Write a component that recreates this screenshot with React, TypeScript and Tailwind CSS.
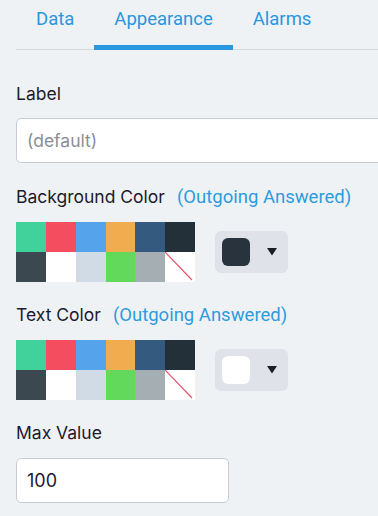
import React from "react";

const SWATCHES = [
  "bg-[#41d19a]",
  "bg-[#f34d5f]",
  "bg-[#55a3ea]",
  "bg-[#f0ac4f]",
  "bg-[#345a80]",
  "bg-[#232f39]",
  "bg-[#3b4850]",
  "bg-white",
  "bg-[#d1dbe5]",
  "bg-[#62d95a]",
  "bg-[#a5aeb3]",
];

const TABS = ["Data", "Appearance", "Alarms"];

function Palette() {
  return (
    <div className="grid w-[179px] grid-cols-6">
      {SWATCHES.map((c, i) => (
        <div key={i} className={`h-[30px] ${c}`} />
      ))}
      {/* "none" swatch */}
      <div className="h-[30px] bg-white">
        <svg width="30" height="30" viewBox="0 0 30 30" className="block">
          <line x1="0" y1="0" x2="27" y2="28" stroke="#e0566a" strokeWidth="1.2" />
        </svg>
      </div>
    </div>
  );
}

function ColorPicker({ title, current }: { title: string; current: string }) {
  return (
    <div>
      <div className="flex items-baseline gap-3 leading-6">
        <span className="text-[17.5px] text-[#1d1a2c] [font-family:Inter,sans-serif]">{title}</span>
        <span className="text-[18.5px] text-[#2d9be0] [font-family:Roboto,sans-serif]">(Outgoing Answered)</span>
      </div>
      <div className="mt-[13px] flex items-center gap-5">
        <Palette />
        <button className="flex h-[42px] w-[73px] items-center rounded-[6px] bg-[#dfe2e9] pl-[7px]">
          <span className={`h-[28px] w-[28px] rounded-[6px] ${current}`} />
          <svg width="10" height="8" viewBox="0 0 10 8" className="ml-[17px]">
            <path d="M0 0 H10 L5 7.5 Z" fill="#1b1f24" />
          </svg>
        </button>
      </div>
    </div>
  );
}

export default function App() {
  return (
    <div className="h-[516px] w-[378px] overflow-hidden bg-[#eff2f4]">
      <div className="ml-4 flex h-[50px] border-b border-[#d5dadf]">
        {TABS.map((t) => (
          <div
            key={t}
            className="relative flex items-center px-5 pb-[10px] text-[18.5px] text-[#2a96dd] [font-family:Roboto,sans-serif]"
          >
            {t}
            {t === "Appearance" && (
              <span className="absolute -bottom-px left-0 right-0 h-[5px] bg-[#2a98e0]" />
            )}
          </div>
        ))}
      </div>

      <div className="px-4 pt-[32px]">
        <div className="text-[17.5px] leading-6 text-[#1d1a2c] [font-family:Inter,sans-serif]">Label</div>
        <input
          placeholder="(default)"
          className="mt-[12px] h-[45px] w-[420px] rounded-[5px] border border-[#c8cdd5] bg-white px-[10px] text-[17.5px] text-[#1d1a2c] outline-none placeholder:text-[#8a8e96] [font-family:Inter,sans-serif]"
        />

        <div className="mt-[22px]">
          <ColorPicker title="Background Color" current="bg-[#28333d]" />
        </div>

        <div className="mt-[21px]">
          <ColorPicker title="Text Color" current="bg-white" />
        </div>

        <div className="mt-[21px] text-[17.5px] leading-6 text-[#1d1a2c] [font-family:Inter,sans-serif]">
          Max Value
        </div>
        <input
          defaultValue="100"
          className="mt-[13px] h-[45px] w-[213px] rounded-[5px] border border-[#c8cdd5] bg-white px-[10px] text-[18px] text-[#1d1a2c] outline-none [font-family:Inter,sans-serif]"
        />
      </div>
    </div>
  );
}
